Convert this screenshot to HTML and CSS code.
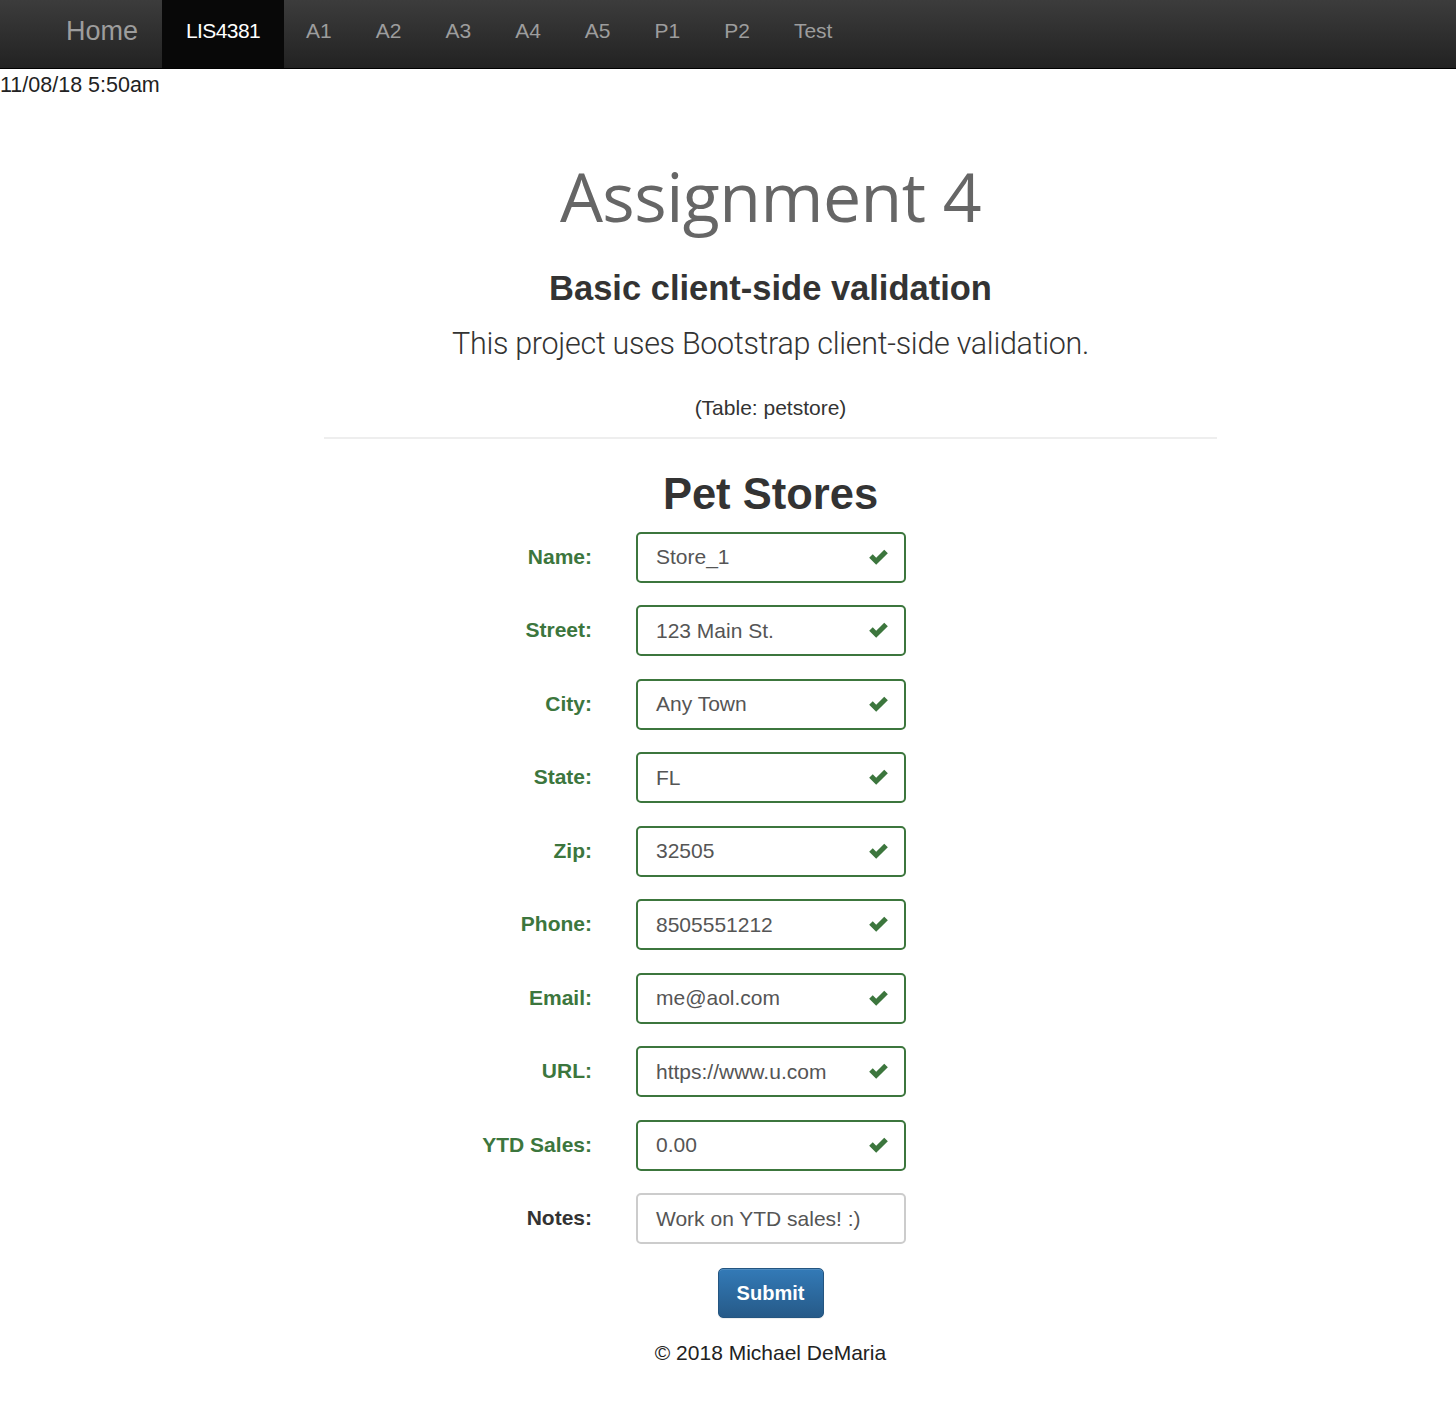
FILE: index.html
```html
<!DOCTYPE html>
<html>
<head>
<meta charset="utf-8">
<link rel="stylesheet" href="styles.css">
</head>
<body>
<nav class="navbar">
  <a class="brand" href="#">Home</a>
  <ul class="nav">
    <li class="active"><a href="#">LIS4381</a></li>
    <li><a href="#">A1</a></li>
    <li><a href="#">A2</a></li>
    <li><a href="#">A3</a></li>
    <li><a href="#">A4</a></li>
    <li><a href="#">A5</a></li>
    <li><a href="#">P1</a></li>
    <li><a href="#">P2</a></li>
    <li><a href="#">Test</a></li>
  </ul>
</nav>
<div class="date">11/08/18 5:50am</div>
<main class="container">
  <header class="page-header">
    <h1 class="title">Assignment 4</h1>
    <h2 class="subtitle">Basic client-side validation</h2>
    <p class="lead">This project uses Bootstrap client-side validation.</p>
    <p class="table-note">(Table: petstore)</p>
  </header>
  <h2 class="form-title">Pet Stores</h2>
  <form class="form">
    <label class="label ok">Name:</label>
    <div class="field ok"><span class="value">Store_1</span><svg class="check" viewBox="0 0 16 16"><path d="M1.5 8.2 L4 5.8 L6.4 8.2 L12 2.6 L14.5 5 L6.4 13.1 Z"/></svg></div>
    <label class="label ok">Street:</label>
    <div class="field ok"><span class="value">123 Main St.</span><svg class="check" viewBox="0 0 16 16"><path d="M1.5 8.2 L4 5.8 L6.4 8.2 L12 2.6 L14.5 5 L6.4 13.1 Z"/></svg></div>
    <label class="label ok">City:</label>
    <div class="field ok"><span class="value">Any Town</span><svg class="check" viewBox="0 0 16 16"><path d="M1.5 8.2 L4 5.8 L6.4 8.2 L12 2.6 L14.5 5 L6.4 13.1 Z"/></svg></div>
    <label class="label ok">State:</label>
    <div class="field ok"><span class="value">FL</span><svg class="check" viewBox="0 0 16 16"><path d="M1.5 8.2 L4 5.8 L6.4 8.2 L12 2.6 L14.5 5 L6.4 13.1 Z"/></svg></div>
    <label class="label ok">Zip:</label>
    <div class="field ok"><span class="value">32505</span><svg class="check" viewBox="0 0 16 16"><path d="M1.5 8.2 L4 5.8 L6.4 8.2 L12 2.6 L14.5 5 L6.4 13.1 Z"/></svg></div>
    <label class="label ok">Phone:</label>
    <div class="field ok"><span class="value">8505551212</span><svg class="check" viewBox="0 0 16 16"><path d="M1.5 8.2 L4 5.8 L6.4 8.2 L12 2.6 L14.5 5 L6.4 13.1 Z"/></svg></div>
    <label class="label ok">Email:</label>
    <div class="field ok"><span class="value">me@aol.com</span><svg class="check" viewBox="0 0 16 16"><path d="M1.5 8.2 L4 5.8 L6.4 8.2 L12 2.6 L14.5 5 L6.4 13.1 Z"/></svg></div>
    <label class="label ok">URL:</label>
    <div class="field ok"><span class="value">https://www.u.com</span><svg class="check" viewBox="0 0 16 16"><path d="M1.5 8.2 L4 5.8 L6.4 8.2 L12 2.6 L14.5 5 L6.4 13.1 Z"/></svg></div>
    <label class="label ok">YTD Sales:</label>
    <div class="field ok"><span class="value">0.00</span><svg class="check" viewBox="0 0 16 16"><path d="M1.5 8.2 L4 5.8 L6.4 8.2 L12 2.6 L14.5 5 L6.4 13.1 Z"/></svg></div>
    <label class="label">Notes:</label>
    <div class="field"><span class="value">Work on YTD sales! :)</span></div>
  </form>
  <div class="actions"><button class="btn" type="button">Submit</button></div>
  <footer class="footer">© 2018 Michael DeMaria</footer>
</main>
</body>
</html>
```
FILE: styles.css
```css
html, body {
  margin: 0;
  padding: 0;
}
body {
  font-family: "Liberation Sans", Arial, sans-serif;
  font-size: 21px;
  color: #333;
  background: #fff;
}
.navbar {
  height: 68px;
  border-bottom: 1px solid #000;
  background: linear-gradient(to bottom, #3c3c3c 0%, #222 100%);
  display: flex;
  align-items: stretch;
  padding-left: 45px;
}
.brand {
  display: flex;
  align-items: center;
  padding: 0 24px 6px 21px;
  font-size: 27px;
  color: #9d9d9d;
  text-decoration: none;
}
.nav {
  list-style: none;
  margin: 0;
  padding: 0;
  display: flex;
}
.nav li {
  display: flex;
}
.nav a {
  display: flex;
  align-items: center;
  padding: 0 22px 6px;
  color: #9d9d9d;
  text-decoration: none;
  font-size: 21px;
}
.nav li.active a {
  background: #080808;
  color: #fff;
  letter-spacing: -0.6px;
  padding: 0 24px 6px 24px;
}
.date {
  font-size: 21.5px;
  line-height: 30px;
  padding-top: 1px;
  color: #222;
}
.container {
  width: 893px;
  margin-left: 324px;
  text-align: center;
}
.page-header {
  border-bottom: 2px solid #eee;
  padding-bottom: 15px;
}
.title {
  font-family: "Open Sans", sans-serif;
  font-weight: 400;
  font-size: 68px;
  color: #666;
  margin: 62px 0 0;
  line-height: 1;
  letter-spacing: -0.5px;
}
.subtitle {
  font-size: 34.5px;
  font-weight: 700;
  margin: 40px 0 0;
  line-height: 1.1;
  color: #333;
}
.lead {
  font-family: Roboto, sans-serif;
  font-weight: 300;
  font-size: 30.5px;
  margin: 18px 0 0;
  line-height: 1.2;
  color: #333;
  letter-spacing: -0.3px;
}
.table-note {
  font-size: 21px;
  margin: 30px 0 0;
  line-height: 1.4;
}
.form-title {
  font-size: 43.5px;
  font-weight: 700;
  margin: 32px 0 0;
  line-height: 1.1;
  color: #333;
}
.form {
  display: grid;
  grid-template-columns: 268px 270px;
  column-gap: 44px;
  row-gap: 22.5px;
  margin-top: 13px;
  text-align: left;
}
.label {
  font-weight: 700;
  font-size: 21px;
  text-align: right;
  align-self: start;
  padding-top: 13px;
  color: #333;
}
.label.ok {
  color: #3c763d;
}
.field {
  height: 47px;
  border: 2px solid #ccc;
  border-radius: 5px;
  display: flex;
  align-items: center;
  padding: 0 18px;
  color: #555;
  font-size: 21px;
}
.field.ok {
  border-color: #3c763d;
}
.value {
  flex: 1;
}
.check {
  width: 23px;
  height: 23px;
  fill: #3c763d;
  margin-right: -4px;
}
.actions {
  margin-top: 24px;
}
.btn {
  width: 106px;
  height: 50px;
  border: 1px solid #245580;
  border-radius: 5px;
  background: linear-gradient(to bottom, #337ab7 0%, #265a88 100%);
  color: #fff;
  font-family: "Liberation Sans", Arial, sans-serif;
  font-weight: 700;
  font-size: 20px;
  padding: 0;
  box-shadow: inset 0 1px 0 rgba(255,255,255,.15), 0 1px 1px rgba(0,0,0,.075);
}
.footer {
  margin-top: 23px;
  font-size: 21px;
  color: #222;
}
```
